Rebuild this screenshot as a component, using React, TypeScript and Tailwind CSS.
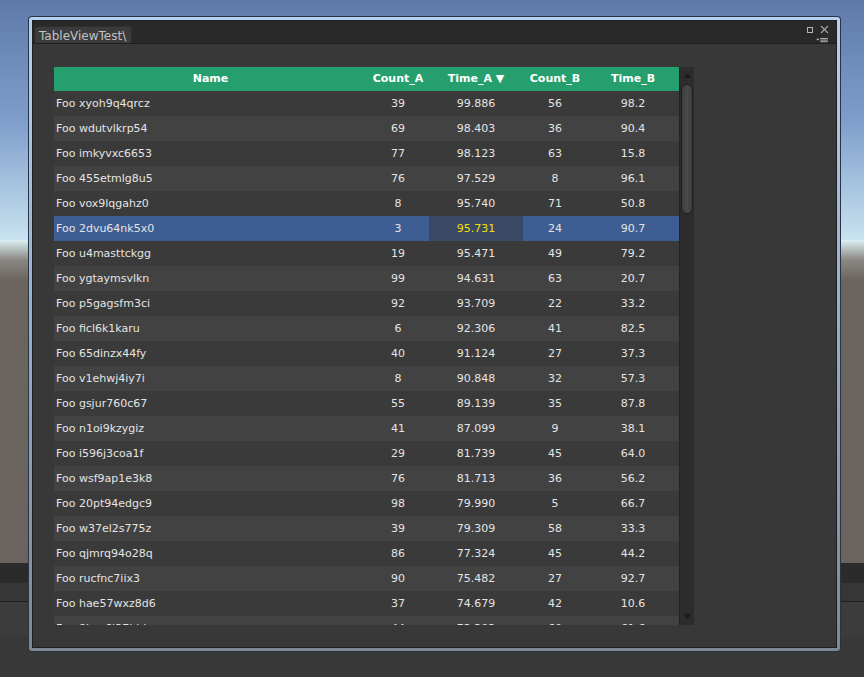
import React from "react";

type Row = [string, number, string, number, string];

const rows: Row[] = [
    ["xyoh9q4qrcz", 39, "99.886", 56, "98.2"],
    ["wdutvlkrp54", 69, "98.403", 36, "90.4"],
    ["imkyvxc6653", 77, "98.123", 63, "15.8"],
    ["455etmlg8u5", 76, "97.529", 8, "96.1"],
    ["vox9lqgahz0", 8, "95.740", 71, "50.8"],
    ["2dvu64nk5x0", 3, "95.731", 24, "90.7"],
    ["u4masttckgg", 19, "95.471", 49, "79.2"],
    ["ygtaymsvlkn", 99, "94.631", 63, "20.7"],
    ["p5gagsfm3ci", 92, "93.709", 22, "33.2"],
    ["ficl6k1karu", 6, "92.306", 41, "82.5"],
    ["65dinzx44fy", 40, "91.124", 27, "37.3"],
    ["v1ehwj4iy7i", 8, "90.848", 32, "57.3"],
    ["gsjur760c67", 55, "89.139", 35, "87.8"],
    ["n1oi9kzygiz", 41, "87.099", 9, "38.1"],
    ["i596j3coa1f", 29, "81.739", 45, "64.0"],
    ["wsf9ap1e3k8", 76, "81.713", 36, "56.2"],
    ["20pt94edgc9", 98, "79.990", 5, "66.7"],
    ["w37el2s775z", 39, "79.309", 58, "33.3"],
    ["qjmrq94o28q", 86, "77.324", 45, "44.2"],
    ["rucfnc7iix3", 90, "75.482", 27, "92.7"],
    ["hae57wxz8d6", 37, "74.679", 42, "10.6"],
    ["8hxs6l37bbk", 44, "73.303", 60, "61.6"],
];

const SELECTED = 5;

export default function App() {
    return (
        <div
            className="relative w-[864px] h-[677px] overflow-hidden"
            style={{ fontFamily: '"DejaVu Sans", "Liberation Sans", sans-serif' }}
        >
            {/* Scene view behind the window */}
            <div className="flex flex-col h-full">
                <div className="h-[240px] bg-gradient-to-b from-[#5f7aaa] via-[#7f9dcb] to-[#c9e3f0]" />
                <div className="h-[40px] bg-gradient-to-b from-[#dcf0f4] via-[#8a8884] to-[#6c655f]" />
                <div className="h-[283px] bg-[#6b635d]" />
                <div className="h-[20px] bg-[#2b2b2b]" />
                <div className="h-[19px] bg-[#363636] border-b border-[#1f1f1f]" />
                <div className="h-[35px] bg-[#3c3c3c]" />
                <div className="flex-1 bg-[#383838]" />
            </div>

            {/* Floating editor window */}
            <div className="absolute left-[28px] top-[16px] w-[813px] h-[636px] rounded-[4px] bg-[#2b3340] p-px">
                <div className="h-full rounded-[3px] bg-gradient-to-b from-[#b6d2f2] via-[#93aecd] to-[#7e8892] p-[3px]">
                    <div className="h-full flex flex-col bg-[#383838] border border-[#1f1f1f]">
                        {/* Tab bar */}
                        <div className="h-[23px] shrink-0 flex items-end justify-between bg-[#292929] border-b border-[#1e1e1e] pl-[2px] pr-[7px]">
                            <div className="h-[17px] w-[97px] bg-[#3b3b3b] rounded-t-[3px] border-t border-r border-[#2f2f2f] flex items-center pl-[4px] pt-[2px] text-[12px] text-[#c2c2c2] leading-none overflow-hidden whitespace-nowrap">
                                TableViewTest\
                            </div>
                            <div className="flex flex-col items-end self-stretch pt-[4px] gap-[4px]">
                                <div className="flex items-center gap-[7px]">
                                    <svg width="6" height="6" viewBox="0 0 6 6">
                                        <rect x="0.5" y="0.5" width="5" height="5" fill="none" stroke="#b5b5b5" />
                                        <rect x="2" y="2" width="2" height="2" fill="#2a2a2a" />
                                    </svg>
                                    <svg width="9" height="9" viewBox="0 0 9 9">
                                        <path d="M1 1 L8 8 M8 1 L1 8" stroke="#a8a8a8" strokeWidth="1.1" />
                                    </svg>
                                </div>
                                <svg width="14" height="6" viewBox="0 0 14 6">
                                    <path d="M0 1 L4 1 L2 3 Z" fill="#c8c8c8" />
                                    <rect x="5" y="0" width="9" height="1" fill="#c8c8c8" />
                                    <rect x="5" y="2" width="9" height="1" fill="#c8c8c8" />
                                    <rect x="5" y="4" width="9" height="1" fill="#c8c8c8" />
                                </svg>
                            </div>
                        </div>

                        {/* Table area */}
                        <div className="flex-1 pt-[23px] pl-[21px]">
                            <div className="flex w-[640px] h-[558px]">
                                <div className="w-[625px] flex flex-col">
                                    {/* Header */}
                                    <div className="h-[24px] shrink-0 flex bg-[#269f6f] text-white font-bold text-[11px] items-center">
                                        <div className="w-[313px] text-center">Name</div>
                                        <div className="w-[62px] text-center">Count_A</div>
                                        <div className="w-[94px] text-center">Time_A ▼</div>
                                        <div className="w-[64px] text-center">Count_B</div>
                                        <div className="w-[92px] text-center">Time_B</div>
                                    </div>
                                    {/* Body */}
                                    <div className="flex-1 overflow-hidden text-[11px]">
                                        {rows.map((r, i) => {
                                            const sel = i === SELECTED;
                                            const bg = sel ? "bg-[#3e5e93]" : i % 2 === 0 ? "bg-[#3a3a3a]" : "bg-[#424242]";
                                            return (
                                                <div key={r[0]} className={`h-[25px] flex text-[#e4e4e4] ${bg}`}>
                                                    <div className="w-[313px] h-full flex items-center pt-[2px] pl-[2px] whitespace-nowrap">Foo {r[0]}</div>
                                                    <div className="w-[62px] h-full flex items-center justify-center pt-[2px]">{r[1]}</div>
                                                    <div className={`w-[94px] h-full flex items-center justify-center pt-[2px] ${sel ? "bg-[#3a4a64] text-[#f2e100]" : ""}`}>
                                                        {r[2]}
                                                    </div>
                                                    <div className="w-[64px] h-full flex items-center justify-center pt-[2px]">{r[3]}</div>
                                                    <div className="w-[92px] h-full flex items-center justify-center pt-[2px]">{r[4]}</div>
                                                </div>
                                            );
                                        })}
                                    </div>
                                </div>

                                {/* Scrollbar */}
                                <div className="w-[15px] flex flex-col items-center bg-[#2c2c2c] border-l border-[#232323]">
                                    <svg width="9" height="14" viewBox="0 0 9 14" className="shrink-0 mt-[2px]">
                                        <path d="M4.5 4 L8 9 L1 9 Z" fill="#1a1a1a" />
                                    </svg>
                                    <div className="w-[12px] h-[130px] mt-[1px] rounded-[6px] bg-gradient-to-r from-[#3d3d3d] via-[#4a4a4a] to-[#3d3d3d] border border-[#202020]" />
                                    <div className="flex-1" />
                                    <svg width="9" height="12" viewBox="0 0 9 12" className="shrink-0 mb-[2px]">
                                        <path d="M1 3 L8 3 L4.5 8 Z" fill="#1a1a1a" />
                                    </svg>
                                </div>
                            </div>
                        </div>
                    </div>
                </div>
            </div>
        </div>
    );
}
